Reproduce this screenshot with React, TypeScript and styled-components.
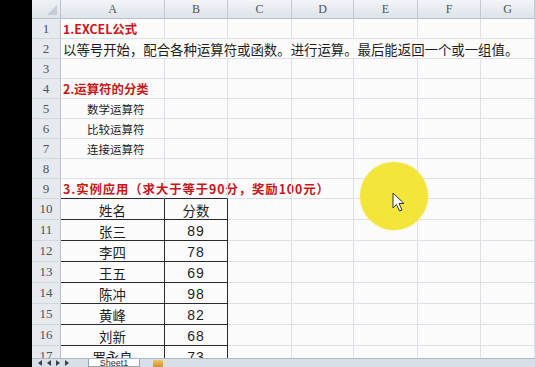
import styled, { createGlobalStyle, css } from 'styled-components'

const GlobalStyle = createGlobalStyle`
    html, body {
        margin: 0;
        padding: 0;
        background: #000;
        overflow: hidden;
    }
`

const COLS = ['A', 'B', 'C', 'D', 'E', 'F', 'G']
const CJK = `"Noto Sans CJK SC", "Noto Sans", sans-serif`

const Screen = styled.div`
    display: flex;
    width: 535px;
    height: 367px;
    position: relative;
    overflow: hidden;
`

const BlackBar = styled.div`
    width: 32px;
    flex-shrink: 0;
    background: #000;
`

const Workbook = styled.div`
    flex: 1;
    display: flex;
    flex-direction: column;
    background: #fbfbfb;
`

const Sheet = styled.div`
    height: 358px;
    overflow: hidden;
    display: grid;
    grid-template-columns: 29px 104px 63px 64px 62px 64px 63px 54px;
    grid-template-rows: 19px repeat(9, 20px) repeat(8, 21px);
`

const Corner = styled.div`
    background: linear-gradient(#eef1f5, #dfe4ea);
    border-right: 1px solid #b9c2cc;
    border-bottom: 1px solid #b9c2cc;
    box-sizing: border-box;
    position: relative;
    &::after {
        content: '';
        position: absolute;
        right: 3px;
        bottom: 3px;
        border-left: 10px solid transparent;
        border-bottom: 10px solid #c4ccd5;
    }
`

const ColHead = styled.div`
    background: linear-gradient(#f3f5f8, #dde3ea);
    border-right: 1px solid #c3cad2;
    border-bottom: 1px solid #b9c2cc;
    box-sizing: border-box;
    display: flex;
    align-items: center;
    justify-content: center;
    font-family: "Liberation Serif", serif;
    font-size: 12px;
    color: #4d5560;
`

const RowHead = styled.div`
    background: #e6eaef;
    border-right: 1px solid #b9c2cc;
    border-bottom: 1px solid #d3d8de;
    box-sizing: border-box;
    display: flex;
    align-items: center;
    justify-content: center;
    font-family: "Liberation Serif", serif;
    font-size: 13px;
    color: #4d5560;
`

type Variant = 'plain' | 'title' | 'wide' | 'small' | 'num'

const Cell = styled.div<{ $span?: number; $variant?: Variant; $center?: boolean; $boxed?: boolean; $boxTop?: boolean; $indent?: number }>`
    grid-column: span ${p => p.$span ?? 1};
    border-right: 1px solid #dde0e4;
    border-bottom: 1px solid #dde0e4;
    box-sizing: border-box;
    display: flex;
    align-items: center;
    justify-content: ${p => (p.$center ? 'center' : 'flex-start')};
    padding-left: ${p => (p.$center ? 0 : (p.$indent ?? 2))}px;
    padding-top: 1px;
    white-space: nowrap;
    overflow: visible;
    font-family: ${CJK};
    font-size: 13.4px;
    color: #1e1e1e;
    ${p => (p.$variant === 'title' || p.$variant === 'wide') && css`
        font-size: 12.4px;
        font-weight: 700;
        color: #c8161a;
    `}
    ${p => p.$variant === 'wide' && css`
        letter-spacing: 0.9px;
    `}
    ${p => p.$variant === 'small' && css`
        font-size: 11.5px;
    `}
    ${p => p.$variant === 'num' && css`
        font-family: "Liberation Sans", sans-serif;
        font-size: 14px;
        letter-spacing: 1px;
    `}
    ${p => p.$boxed && css`
        border-right-color: #2a2a2a;
        border-bottom-color: #2a2a2a;
    `}
    ${p => p.$boxTop && css`
        border-bottom-color: #2a2a2a;
    `}
`

const TabBar = styled.div`
    height: 9px;
    display: flex;
    align-items: center;
    gap: 5px;
    background: #d9dfe6;
    border-top: 1px solid #aeb8c3;
    overflow: hidden;
    padding-left: 6px;
    box-sizing: border-box;
`

const NavArrow = styled.span<{ $dir: 'left' | 'right' }>`
    width: 0;
    height: 0;
    border-top: 3px solid transparent;
    border-bottom: 3px solid transparent;
    ${p => p.$dir === 'left'
        ? css`border-right: 4px solid #39424d;`
        : css`border-left: 4px solid #39424d;`}
`

const SheetTab = styled.div`
    margin-left: 14px;
    width: 52px;
    height: 8px;
    align-self: flex-start;
    background: #fdfdfd;
    border: 1px solid #9aa5b1;
    border-top: none;
    box-sizing: border-box;
    overflow: hidden;
    font-family: "Liberation Sans", sans-serif;
    font-size: 9px;
    line-height: 8px;
    color: #333;
    text-align: center;
`

const InsertIcon = styled.div`
    margin-left: 8px;
    width: 10px;
    height: 7px;
    background: linear-gradient(#f2c46a, #d68d2a);
    border-radius: 1px;
`

const Highlight = styled.div`
    position: absolute;
    left: 360px;
    top: 162px;
    width: 68px;
    height: 68px;
    border-radius: 50%;
    background: radial-gradient(circle, #f4e63a 0%, #f3e43a 80%, rgba(243, 228, 58, 0.85) 100%);
    box-shadow: 0 0 2px rgba(243, 228, 58, 0.7);
`

const Pointer = styled.svg`
    position: absolute;
    left: 392px;
    top: 192px;
`

const plainRows: Record<number, { text: string; variant?: Variant; span?: number; indent?: number }> = {
    1: { text: '1.EXCEL公式', variant: 'title' },
    2: { text: '以等号开始，配合各种运算符或函数。进行运算。最后能返回一个或一组值。', span: 7 },
    4: { text: '2.运算符的分类', variant: 'title' },
    5: { text: '数学运算符', variant: 'small', indent: 26 },
    6: { text: '比较运算符', variant: 'small', indent: 26 },
    7: { text: '连接运算符', variant: 'small', indent: 26 },
}

const table: [string, string][] = [
    ['姓名', '分数'],
    ['张三', '89'],
    ['李四', '78'],
    ['王五', '69'],
    ['陈冲', '98'],
    ['黄峰', '82'],
    ['刘新', '68'],
    ['罗永良', '73'],
]

const App = () => {
    const rows = []

    for (let r = 1; r <= 9; r++) {
        const first = plainRows[r]
        let used = 0
        rows.push(<RowHead key={`h${r}`}>{r}</RowHead>)
        if (first) {
            rows.push(
                <Cell key={`f${r}`} $variant={first.variant} $span={first.span} $indent={first.indent}>
                    {first.text}
                </Cell>
            )
            used = first.span ?? 1
        }
        if (r === 9) {
            rows.push(<Cell key="t9" $variant="wide" $boxTop>3.实例应用（求大于等于90分，奖励100元）</Cell>)
            rows.push(<Cell key="t9b" $boxTop />)
            used = 2
        }
        for (let c = used; c < 7; c++) rows.push(<Cell key={`${r}-${c}`} />)
    }

    table.forEach(([name, score], i) => {
        const r = 10 + i
        rows.push(<RowHead key={`h${r}`}>{r}</RowHead>)
        rows.push(<Cell key={`${r}-a`} $center $boxed>{name}</Cell>)
        rows.push(
            <Cell key={`${r}-b`} $center $boxed $variant={i === 0 ? 'plain' : 'num'}>
                {score}
            </Cell>
        )
        for (let c = 2; c < 7; c++) rows.push(<Cell key={`${r}-${c}`} />)
    })

    return (
        <>
            <GlobalStyle />
            <Screen>
                <BlackBar />
                <Workbook>
                    <Sheet>
                        <Corner />
                        {COLS.map(c => <ColHead key={c}>{c}</ColHead>)}
                        {rows}
                    </Sheet>
                    <TabBar>
                        <NavArrow $dir="left" />
                        <NavArrow $dir="left" />
                        <NavArrow $dir="right" />
                        <NavArrow $dir="right" />
                        <SheetTab>Sheet1</SheetTab>
                        <InsertIcon />
                    </TabBar>
                </Workbook>
                <Highlight />
                <Pointer width="14" height="21" viewBox="0 0 14 21">
                    <path d="M1 1 L1 16 L4.5 12.5 L7.5 19 L10 18 L7 11.5 L12 11.5 Z" fill="#fff" stroke="#333" strokeWidth="1" strokeLinejoin="round" />
                </Pointer>
            </Screen>
        </>
    )
}

export default App
